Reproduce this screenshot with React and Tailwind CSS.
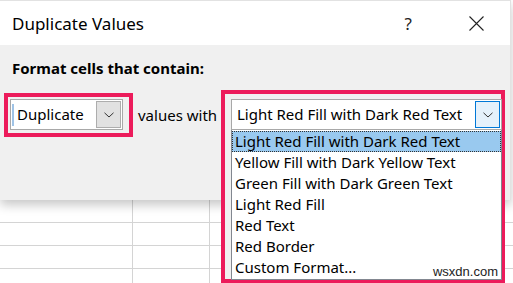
const items = [
  'Light Red Fill with Dark Red Text',
  'Yellow Fill with Dark Yellow Text',
  'Green Fill with Dark Green Text',
  'Light Red Fill',
  'Red Text',
  'Red Border',
  'Custom Format...',
]

function Chevron() {
  return (
    <svg width="10" height="6" viewBox="0 0 10 6" fill="none">
      <path d="M0.5 0.8 L5 5 L9.5 0.8" stroke="#333" strokeWidth="1" />
    </svg>
  )
}

function GridRow() {
  return (
    <div className="flex h-[23px] border-b border-[#d4d4d4]">
      <div className="w-[133px] shrink-0 border-r border-[#d4d4d4]" />
      {[0, 1, 2, 3, 4].map(i => (
        <div key={i} className="w-[77px] shrink-0 border-r border-[#d4d4d4]" />
      ))}
    </div>
  )
}

export default function App() {
  return (
    <div className="relative w-[513px] h-[283px] overflow-hidden bg-white text-[#000]" style={{ fontFamily: '"Noto Sans", "Open Sans", sans-serif' }}>
      {/* dialog */}
      <div className="relative z-10 h-[200px] w-[511px] border-t border-r border-[#e2e2e2] shadow-[0_5px_10px_rgba(0,0,0,0.22)]">
        <div className="flex h-[44px] items-center bg-white pl-[12px] pr-[26px]">
          <span className="text-[17px] leading-none">Duplicate Values</span>
          <span className="ml-auto text-[17px] leading-none text-[#222]">?</span>
          <svg className="ml-[57px]" width="15" height="15" viewBox="0 0 15 15">
            <path d="M0.5 0.5 L14.5 14.5 M14.5 0.5 L0.5 14.5" stroke="#222" strokeWidth="1.1" />
          </svg>
        </div>
        <div className="h-[155px] bg-[#f0f0f0] pt-[13px]">
          <div className="pl-[12px] text-[15px] font-bold leading-[20px]">Format cells that contain:</div>
          <div className="mt-[15px] flex items-center pl-[4px]">
            <div className="h-[44px] w-[129px] border-4 border-[#ec1b5b] pl-[2px] pt-[2px]">
              <div className="flex h-[31px] w-[113px] items-center border border-[#a8a8a8] bg-white pl-[1px] pr-[1px]">
                <div className="h-[22px] w-[2px] bg-[#9fc3e6]" />
                <span className="ml-[3px] text-[15px] leading-none">Duplicate</span>
                <div className="ml-auto flex h-[27px] w-[25px] items-center justify-center border border-[#adadad] bg-[#e1e1e1]">
                  <Chevron />
                </div>
              </div>
            </div>
            <span className="ml-[5px] text-[15px] leading-none">values with</span>
          </div>
        </div>
      </div>

      {/* spreadsheet behind */}
      <div>
        <GridRow />
        <GridRow />
        <GridRow />
        <GridRow />
      </div>

      {/* second combo with open list */}
      <div className="absolute left-[221px] top-[90px] z-20 h-[193px] w-[284px] border-4 border-[#ec1b5b] bg-[#f0f0f0] pl-[6px] pt-[5px]">
        <div className="flex h-[31px] w-[271px] items-center border border-[#a8a8a8] bg-white pl-[5px] pr-[1px]">
          <span className="text-[15px] leading-none">Light Red Fill with Dark Red Text</span>
          <div className="ml-auto flex h-[27px] w-[25px] items-center justify-center border border-[#0078d7] bg-[#e5f1fb]">
            <Chevron />
          </div>
        </div>
        <div className="h-[150px] w-[271px] border border-t-0 border-[#828790] bg-white pt-[1px]">
          {items.map((t, i) => (
            <div
              key={t}
              className={
                'flex h-[21px] items-center pl-[2px] text-[15px] leading-none ' +
                (i === 0 ? 'border border-dotted border-[#333] bg-[#99c9ef]' : 'border border-transparent')
              }
            >
              {t}
            </div>
          ))}
        </div>
        <span className="absolute right-[3px] bottom-[1px] text-[13px] leading-none text-[#222]" style={{ fontFamily: '"Liberation Sans", sans-serif' }}>
          wsxdn.com
        </span>
      </div>
    </div>
  )
}
